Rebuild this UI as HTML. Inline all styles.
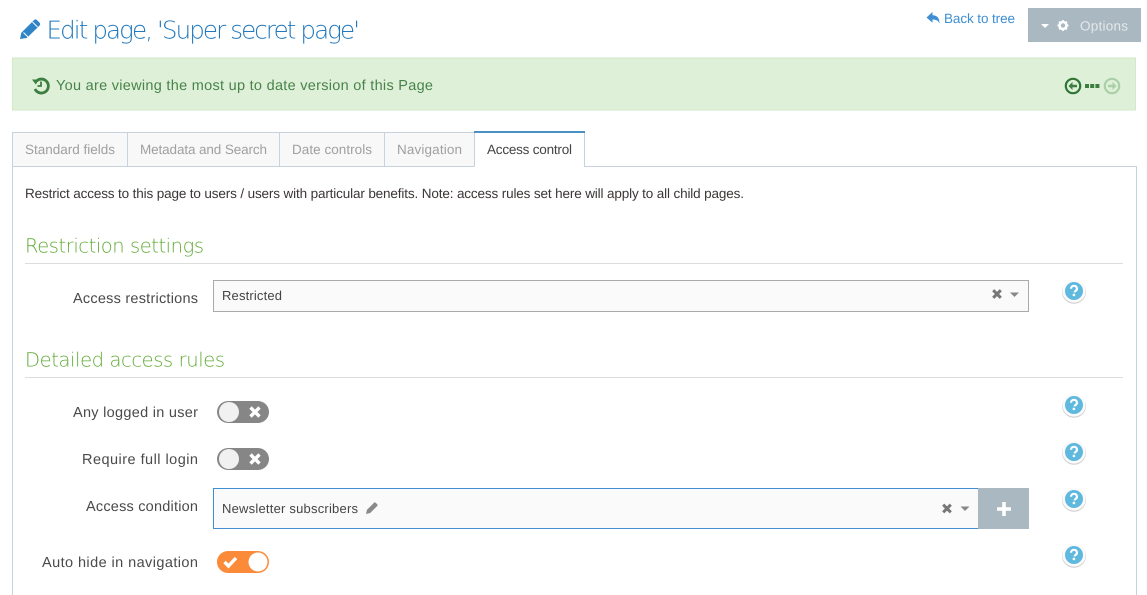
<!DOCTYPE html>
<html><head><meta charset="utf-8"><title>Edit page</title>
<style>
html,body{margin:0;padding:0;background:#fff;width:1147px;height:595px;overflow:hidden}
svg{display:block}
text{font-family:"Liberation Sans",sans-serif;text-rendering:geometricPrecision}
.lab{font-size:14.5px;fill:#4a4a4a}
.tab{font-size:13.5px;fill:#a0a0a0}
.h{font-family:"DejaVu Sans","Liberation Sans",sans-serif;font-weight:200;font-size:19.5px;fill:#62ab38}
.val{font-size:13px;fill:#444}
</style></head><body>
<svg width="1147" height="595" viewBox="0 0 1147 595" xmlns="http://www.w3.org/2000/svg">
<defs>
<g id="help"><circle cx="0" cy="0.800" r="12" fill="#cfcfcf"/><circle cx="0" cy="0" r="11.600" fill="#fbfbfb"/><circle cx="0" cy="0" r="9" fill="#5fb9de"/>
<path d="M-3 -2.200a3 3 0 0 1 6 0c0 2-2.400 2-2.400 3.600" fill="none" stroke="#fff" stroke-width="2.200"/><rect x="-1.300" y="2.800" width="2.400" height="2.300" fill="#fff"/></g>
<g id="x"><path d="M-3.800 -3.800L3.800 3.800M3.800 -3.800L-3.800 3.800" stroke="#777" stroke-width="3" fill="none"/></g>
<g id="off"><rect x="0" y="0" width="52" height="22" rx="11" fill="#868686"/><circle cx="12" cy="11" r="10" fill="#f1f1f1"/><path d="M33.500 6.500L42.500 15.500M42.500 6.500L33.500 15.500" stroke="#fff" stroke-width="3.400" fill="none"/></g>
</defs>

<!-- title -->
<path d="M20 39l1.300-6.200 12.700-12.700c.9-.9 2.100-.9 3 0l2.500 2.500c.9.900.9 2.100 0 3L26.800 38z" fill="#2f83c7"/>
<path d="M32.500 22l5 5" stroke="#fff" stroke-width="1" fill="none"/>
<path d="M23.500 32.500l4.500 4.500" stroke="#fff" stroke-width="1" fill="none"/>
<text x="46.500" y="38.500" font-size="24.500" fill="#2278bd" textLength="313.500" lengthAdjust="spacing" style='font-family:"DejaVu Sans","Liberation Sans",sans-serif;font-weight:200'>Edit page, 'Super secret page'</text>

<!-- back to tree -->
<path d="M926.500 17.500l6-5.500v3.200c4.500 0 7 2.500 7 8.300-1.300-3-3.300-4-7-4v3.300z" fill="#3f8fd2"/>
<text x="944" y="23" font-size="13.500" fill="#3f8fd2" textLength="71" lengthAdjust="spacing">Back to tree</text>

<!-- options -->
<rect x="1028" y="8" width="113" height="34" fill="#aab8c1"/>
<path d="M1041 24h8l-4 4z" fill="#fff"/>
<circle cx="1063" cy="25.500" r="3.500" fill="none" stroke="#fff" stroke-width="2.600"/>
<path d="M1063 20v2M1063 29v2M1057.500 25.500h2M1066.500 25.500h2M1059.100 21.600l1.400 1.400M1065.500 28l1.400 1.400M1059.100 29.400l1.400-1.400M1065.500 23l1.400-1.400" stroke="#fff" stroke-width="1.800"/>
<text x="1080" y="30.500" font-size="13.500" fill="#e3e8eb" textLength="48" lengthAdjust="spacing">Options</text>

<!-- banner -->
<rect x="12.500" y="58" width="1123" height="52" fill="#dff0d8" stroke="#d3e8c8"/>
<path d="M12 58h1124" stroke="#cfe5c2" stroke-dasharray="1 1"/>
<path d="M36.500 81a7 7 0 1 1-1.500 8" fill="none" stroke="#3c7d40" stroke-width="2.800"/>
<path d="M32 79.500h7l-3.200 5z" fill="#3c7d40"/>
<path d="M41 81.500v4.500h-3.500" fill="none" stroke="#3c7d40" stroke-width="1.800"/>
<text x="56" y="90" font-size="14.500" fill="#47834a" textLength="377" lengthAdjust="spacing">You are viewing the most up to date version of this Page</text>

<circle cx="1073" cy="86" r="7.200" fill="none" stroke="#2f7536" stroke-width="2.200"/>
<path d="M1068.500 86l4-4v2.700h4.500v2.600h-4.500v2.700z" fill="#3c7d40"/>
<path d="M1085 84h4v4h-4zM1090.200 84h4v4h-4zM1095.400 84h4v4h-4z" fill="#3c7d40"/>
<circle cx="1112" cy="86" r="7.200" fill="none" stroke="#abcfa8" stroke-width="2.200"/>
<path d="M1116.500 86l-4-4v2.700h-4.500v2.600h4.500v2.700z" fill="#abcfa8"/>

<!-- panel -->
<path d="M12.500 595V166.500H1136.500V595" fill="none" stroke="#c6d3de"/>

<!-- tabs -->
<rect x="12.500" y="132.500" width="115" height="34" fill="#f8f8f8" stroke="#c6d3de"/>
<rect x="127.500" y="132.500" width="152" height="34" fill="#f8f8f8" stroke="#c6d3de"/>
<rect x="279.500" y="132.500" width="105" height="34" fill="#f8f8f8" stroke="#c6d3de"/>
<rect x="384.500" y="132.500" width="90" height="34" fill="#f8f8f8" stroke="#c6d3de"/>
<rect x="474.500" y="132" width="110" height="35" fill="#fff"/>
<path d="M474.500 167V132M584.500 132V167" stroke="#c6d3de" fill="none"/>
<rect x="474" y="131" width="111" height="2" fill="#4a90c4"/>
<text class="tab" x="25" y="154" textLength="90" lengthAdjust="spacing">Standard fields</text>
<text class="tab" x="140" y="154" textLength="127" lengthAdjust="spacing">Metadata and Search</text>
<text class="tab" x="292" y="154" textLength="80" lengthAdjust="spacing">Date controls</text>
<text class="tab" x="397" y="154" textLength="65" lengthAdjust="spacing">Navigation</text>
<text class="tab" x="487" y="154" textLength="85" lengthAdjust="spacing" style="fill:#444">Access control</text>

<text x="25" y="198" font-size="13.500" fill="#3d3636" textLength="719" lengthAdjust="spacing">Restrict access to this page to users / users with particular benefits. Note: access rules set here will apply to all child pages.</text>

<!-- restriction settings -->
<text class="h" x="25" y="252.500" textLength="179" lengthAdjust="spacing">Restriction settings</text>
<rect x="25" y="263" width="1098" height="1" fill="#ddd"/>
<text class="lab" x="73" y="303" textLength="125" lengthAdjust="spacing">Access restrictions</text>
<rect x="213.500" y="280.500" width="815" height="31" fill="#fafafa" stroke="#aaa"/>
<text class="val" x="222" y="300" textLength="60" lengthAdjust="spacing">Restricted</text>
<use href="#x" x="997" y="294"/>
<path d="M1010 292.500h9l-4.500 4.500z" fill="#888"/>
<use href="#help" x="1074" y="291"/>

<!-- detailed -->
<text class="h" x="25" y="366.500" textLength="200" lengthAdjust="spacing">Detailed access rules</text>
<rect x="25" y="377" width="1098" height="1" fill="#ddd"/>

<text class="lab" x="73" y="417" textLength="125" lengthAdjust="spacing">Any logged in user</text>
<use href="#off" x="217" y="401"/>
<use href="#help" x="1074" y="405"/>

<text class="lab" x="82" y="464" textLength="116" lengthAdjust="spacing">Require full login</text>
<use href="#off" x="217" y="448"/>
<use href="#help" x="1074" y="452"/>

<text class="lab" x="86" y="511" textLength="112" lengthAdjust="spacing">Access condition</text>
<rect x="213.500" y="488.500" width="766" height="40" fill="#fafafa" stroke="#3f8fd2"/>
<text class="val" x="222" y="513" textLength="136" lengthAdjust="spacing">Newsletter subscribers</text>
<path d="M366 514l1-4.200 7-7c.5-.5 1.200-.5 1.700 0l1.500 1.500c.5.500.5 1.200 0 1.700l-7 7z" fill="#8a8a8a"/>
<use href="#x" x="947" y="508.500"/>
<path d="M960.500 506.500h9l-4.500 4.500z" fill="#888"/>
<rect x="978" y="488" width="51" height="41" fill="#aab8c1"/>
<path d="M1004 502v14M997 509h14" stroke="#fff" stroke-width="3.600" fill="none"/>
<use href="#help" x="1074" y="499"/>

<text class="lab" x="42" y="567" textLength="156" lengthAdjust="spacing">Auto hide in navigation</text>
<rect x="217" y="551" width="52" height="22" rx="11" fill="#fb8a39"/>
<circle cx="258" cy="562" r="9.500" fill="#fff"/>
<path d="M224.500 562l4 4 7.500-8" stroke="#fff" stroke-width="3.400" fill="none"/>
<use href="#help" x="1074" y="555"/>
</svg>
</body></html>
